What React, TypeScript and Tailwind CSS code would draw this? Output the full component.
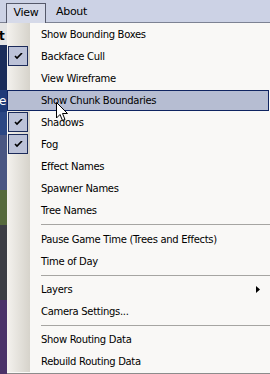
import React from "react";

type Item =
  | { kind: "item"; label: string; checked?: boolean; hot?: boolean; sub?: boolean }
  | { kind: "sep"; h: string };

const items: Item[] = [
  { kind: "item", label: "Show Bounding Boxes" },
  { kind: "item", label: "Backface Cull", checked: true },
  { kind: "item", label: "View Wireframe" },
  { kind: "item", label: "Show Chunk Boundaries", hot: true },
  { kind: "item", label: "Shadows", checked: true },
  { kind: "item", label: "Fog", checked: true },
  { kind: "item", label: "Effect Names" },
  { kind: "item", label: "Spawner Names" },
  { kind: "item", label: "Tree Names" },
  { kind: "sep", h: "h-[7px]" },
  { kind: "item", label: "Pause Game Time (Trees and Effects)" },
  { kind: "item", label: "Time of Day" },
  { kind: "sep", h: "h-[6px]" },
  { kind: "item", label: "Layers", sub: true },
  { kind: "item", label: "Camera Settings..." },
  { kind: "sep", h: "h-[6px]" },
  { kind: "item", label: "Show Routing Data" },
  { kind: "item", label: "Rebuild Routing Data" },
];

const font = { fontFamily: "Tahoma, 'DejaVu Sans', sans-serif" };

function Check() {
  return (
    <svg width="9" height="7" viewBox="0 0 9 7" className="block">
      <path d="M1 3 L3 5 L8 0" fill="none" stroke="#000" strokeWidth="1.6" />
    </svg>
  );
}

export default function App() {
  return (
    <div
      className="relative w-[270px] h-[374px] overflow-hidden bg-[#f9f8f6] text-black text-[10px] tracking-[-0.3px] flex flex-col"
      style={font}
    >
      {/* menu bar */}
      <div className="h-[23px] shrink-0 bg-[#ccd2e5] border-b border-[#7d8293] flex items-end pl-[6px]">
        <div className="h-[20px] w-[40px] border border-b-0 border-[#55596a] bg-[#d6dae9] flex items-center justify-center -mb-px text-[11px]">
          View
        </div>
        <div className="h-[20px] px-[10px] flex items-center text-[11px]">About</div>
      </div>

      <div className="flex flex-1">
        {/* background app strip */}
        <div className="w-[7px] flex flex-col shrink-0">
          <div className="h-[22px] bg-[#e4e4e4] flex items-end text-[12px] font-bold leading-none overflow-hidden">
            <span className="-ml-[1px] mb-[3px]">t</span>
          </div>
          <div className="h-[45px] bg-[#1b2d5a]" />
          <div className="h-[22px] bg-[#1f3a78] text-white text-[12px] leading-[22px] overflow-hidden">
            <span className="-ml-[1px]">e</span>
          </div>
          <div className="h-[23px] bg-[#2b4683]" />
          <div className="h-[55px] bg-[#4a5682]" />
          <div className="h-[35px] bg-[#56693c]" />
          <div className="h-[75px] bg-[#3c3d44]" />
          <div className="flex-1 bg-[#4a3268]" />
        </div>

        {/* dropdown */}
        <div className="flex-1 flex flex-col border-b border-[#8c8c8c]">
          {items.map((it, i) => {
            if (it.kind === "sep") {
              return (
                <div key={i} className={`${it.h} flex`}>
                  <div className="w-[23px] bg-gradient-to-r from-[#f4f2ee] to-[#d6d3cb]" />
                  <div className="flex-1 flex items-center pl-[11px]">
                    <div className="h-px w-full bg-[#a6a5a2]" />
                  </div>
                </div>
              );
            }
            return (
              <div key={i} className="relative h-[22px] flex">
                <div className="w-[23px] bg-gradient-to-r from-[#f4f2ee] to-[#d6d3cb] relative">
                  {it.checked && (
                    <div className="absolute left-[1px] top-[1px] w-[20px] h-[20px] border border-[#1c2b5a] bg-[#bcc2d8] flex items-center justify-center">
                      <Check />
                    </div>
                  )}
                </div>
                {it.hot && (
                  <div className="absolute left-0 right-[1px] top-[1px] bottom-0 border border-[#0f2461] bg-[#b6bdd2]" />
                )}
                <div className="relative flex-1 flex items-center pl-[11px] whitespace-nowrap">
                  {it.label}
                </div>
                {it.sub && (
                  <div className="absolute right-[10px] top-[8px]">
                    <svg width="4" height="7" viewBox="0 0 4 7" className="block">
                      <path d="M0 0 L4 3.5 L0 7 Z" fill="#000" />
                    </svg>
                  </div>
                )}
              </div>
            );
          })}
        </div>
      </div>

      {/* mouse cursor */}
      <svg
        className="absolute left-[56px] top-[102px]"
        width="13"
        height="20"
        viewBox="0 0 13 20"
      >
        <path
          d="M0.5 0.5 L0.5 16 L4 12.5 L6.5 18.5 L9 17.5 L6.5 11.5 L11.5 11.5 Z"
          fill="#fff"
          stroke="#000"
          strokeWidth="1"
          strokeLinejoin="miter"
        />
      </svg>
    </div>
  );
}
